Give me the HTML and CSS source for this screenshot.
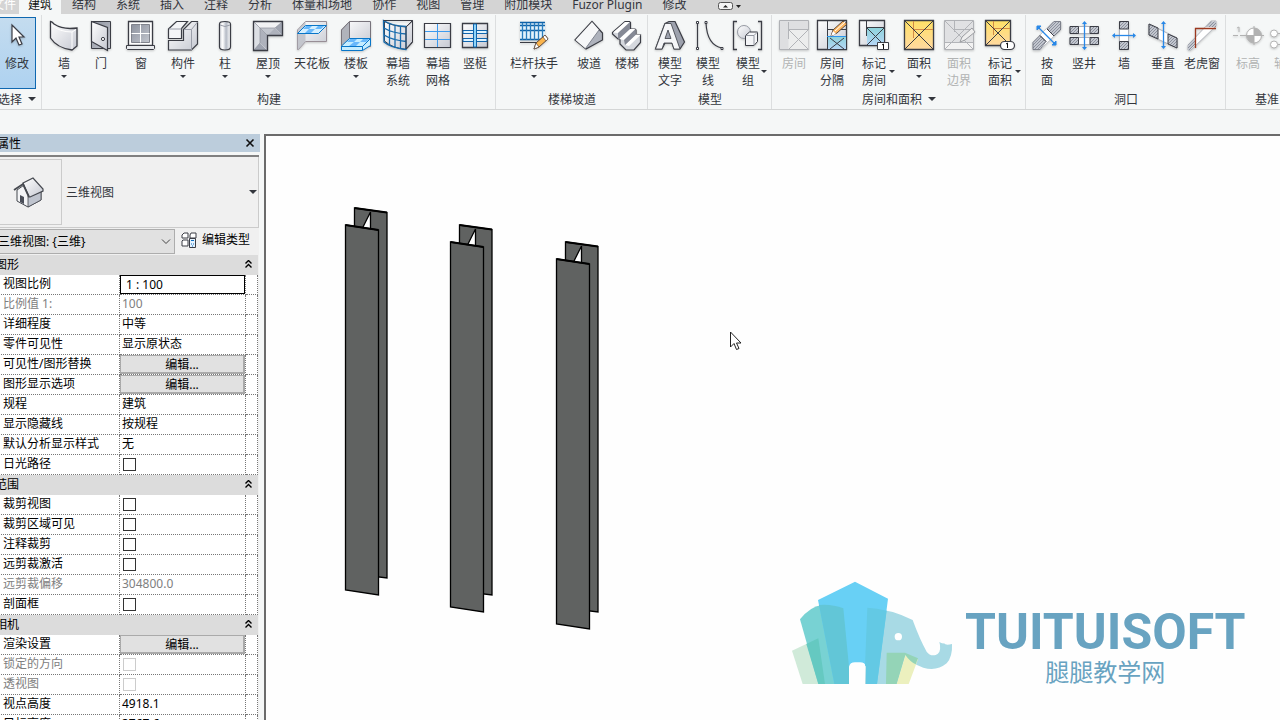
FILE: index.html
```html
<!DOCTYPE html>
<html lang="zh-CN">
<head>
<meta charset="utf-8">
<title>三维视图</title>
<link rel="stylesheet" href="styles.css">
</head>
<body>
<svg class="defs" aria-hidden="true">
  <defs>
    <linearGradient id="metal" x1="0" y1="0" x2="1" y2="1"><stop offset="0" stop-color="#fff"/><stop offset="1" stop-color="#c6c9d2"/></linearGradient>
    <linearGradient id="dark" x1="0" y1="0" x2="1" y2="1"><stop offset="0" stop-color="#8d929e"/><stop offset="1" stop-color="#c3c6ce"/></linearGradient>
    <linearGradient id="tube"><stop offset="0" stop-color="#d4d7dd"/><stop offset=".3" stop-color="#fff"/><stop offset=".6" stop-color="#b4bac5"/><stop offset="1" stop-color="#fff"/></linearGradient>
    <linearGradient id="gold" x1="0" y1="0" x2="0" y2="1"><stop offset="0" stop-color="#ffe066"/><stop offset="1" stop-color="#ffd9a0"/></linearGradient>
    <linearGradient id="aqua" x1="0" y1="0" x2="0" y2="1"><stop offset="0" stop-color="#8fd3dc"/><stop offset="1" stop-color="#b5d6f5"/></linearGradient>
    <pattern id="hatch" width="3" height="3" patternUnits="userSpaceOnUse"><path fill="#c3c7cf" d="M0 0h3v3H0z"/><path d="M0 3L3 0" stroke="#737986" stroke-width=".7"/></pattern>
  </defs>
</svg>

<div class="app">
<header class="ribbon">
  <nav class="tabs" aria-label="功能区">
    <button class="tab file">文件</button><button class="tab active">建筑</button><button class="tab">结构</button><button class="tab">系统</button><button class="tab">插入</button><button class="tab">注释</button><button class="tab">分析</button><button class="tab">体量和场地</button><button class="tab">协作</button><button class="tab">视图</button><button class="tab">管理</button><button class="tab">附加模块</button><button class="tab">Fuzor Plugin</button><button class="tab">修改</button>
    <button class="tab collapse" aria-label="最小化"><svg width="26" height="12" viewBox="0 0 26 12"><rect x="1.500" y="1.500" width="14" height="7" rx="2" fill="#f5f5f5" stroke="#555"/><path d="M6 6.500L8.500 4 11 6.500z" fill="#222"/><path d="M19 4h5l-2.500 3z" fill="#222"/></svg></button>
  </nav>
  <div class="panels">
    <section class="panel first">
      <div class="tools">
        <button class="tool modify"><svg class="icon" viewBox="0 0 32 32"><path d="M11 5v17l4-4 3 7 3-1-3-7h5z" fill="#fff" stroke="#3b3d45" stroke-width="1.200"/></svg><span>修改</span></button>
      </div>
      <h2>选择<i class="caret"></i></h2>
    </section>

    <section class="panel">
      <div class="tools">
        <button class="tool w38"><svg class="icon" viewBox="0 0 32 32"><path d="M2.500 1.500Q4 1.500 6 4q7 4.500 16 4.500 4 0 7-.5V26l-5 4Q9 28 2.500 18z" fill="url(#metal)" stroke="#3b3d45" stroke-width="1.300"/><path d="M3.500 5q8 7 20.500 7l4-2.500M24 12v17" stroke="#fff" fill="none"/></svg><span>墙</span><i class="drop"></i></button>
        <button class="tool w36"><svg class="icon" viewBox="0 0 32 32"><path d="M6.500 1.500h19v27h-19z" fill="url(#dark)" stroke="#3b3d45"/><path d="M6.500 1.500l16 6v23l-16-9z" fill="url(#metal)" stroke="#3b3d45" stroke-width="1.200"/><circle cx="18" cy="19" r="1.600" fill="#fff" stroke="#3b3d45"/></svg><span>门</span></button>
        <button class="tool w44"><svg class="icon" viewBox="0 0 32 32"><path d="M3.500 1.500h24v24h-24z" fill="#fff" stroke="#3b3d45" stroke-width="1.300"/><path d="M6.500 4.500h18v18h-18z" fill="url(#dark)" stroke="#80838c"/><path d="M15.500 4.500v18M6.500 13.500h18" stroke="#fff"/><path d="M1.500 25.500h28v3l-1 1h-26l-1-1z" fill="#e8eaed" stroke="#3b3d45"/></svg><span>窗</span></button>
        <button class="tool w40"><svg class="icon" viewBox="0 0 32 32"><path d="M1.500 20.500h15v-11l8-8h6V24l-6 6h-23z" fill="url(#metal)" stroke="#3b3d45" stroke-width="1.200"/><path d="M1.500 9l8-7.500h11l-6 7v10h-13z" fill="#f4f5f7" stroke="#3b3d45" stroke-width="1.200"/><path d="M2 9h12.500M17 9.500h7.500V30M24.500 9.500l6-7.500" stroke="#9a9ea9" fill="none"/></svg><span>构件</span><i class="drop"></i></button>
        <button class="tool w44"><svg class="icon" viewBox="0 0 32 32"><path d="M10.500 4q0-2.500 5.500-2.500T21.500 4v23q0 3-5.500 3t-5.500-3z" fill="url(#tube)" stroke="#3b3d45" stroke-width="1.200"/><path d="M11 5q5 3 10 0" stroke="#9a9ea9" fill="none"/></svg><span>柱</span><i class="drop"></i></button>
        <button class="tool w42"><svg class="icon" viewBox="0 0 32 32"><path d="M1.500 1.500h29v14h-15v15h-14z" fill="#f1f2f4"/><path d="M2 2v28l6-7V8z" fill="#dcdfe4"/><path d="M23 8l7-6v13zM8 23l7 7H2z" fill="#9fa4b0"/><path d="M23 8l7 7H15.500L8.500 8zM8 8.500l7.500 7V30L8 23z" fill="#aeb2bc"/><path d="M8 8h15l-7.500 7.500z" fill="#c2c6ce"/><path d="M1.500 1.500L8 8h15l7-6M8 8v15l-6 7M8 8l7 7" fill="none" stroke="#8c909b" stroke-width=".7"/><path d="M1.500 1.500h29v14h-15v15h-14z" fill="none" stroke="#3b3d45" stroke-width="1.300"/></svg><span>屋顶</span><i class="drop"></i></button>
        <button class="tool w46"><svg class="icon" viewBox="0 0 32 32"><path d="M1.500 10l8-8.500h21v20h-21l-7 8h-1z" fill="url(#metal)" stroke="#988e96"/><path d="M1.500 10l8-8.500v20l-7 8h-1z" fill="#b4b7bf" opacity=".7"/><path d="M1.500 13.500l8-8h21l-8 8z" fill="#d4efff" stroke="#0876c8"/><path d="M10 6h6l-3 3H7zM22 6h6l-3 3h-6zM13 9h6l-4 4H9z" fill="#68b8fb"/></svg><span>天花板</span></button>
        <button class="tool w42"><svg class="icon" viewBox="0 0 32 32"><path d="M1.500 10l8-8.500h21v25h-29z" fill="url(#metal)" stroke="#77737b"/><path d="M1.500 10l8-8.500v18l-8 7z" fill="#b0b3bb" stroke="#77737b"/><path d="M1.500 26l8-7.500h21v7l-8 5h-21z" fill="#c5edff" stroke="#0876c8"/><path d="M10 19h7l-3 3H7zM23 19h6l-3 3h-6zM14 22h6l-4 4H9z" fill="#68b8fb"/><path d="M1.500 26.500h21l8-8M22.500 26.500v4" stroke="#0876c8" fill="none"/></svg><span>楼板</span><i class="drop"></i></button>
        <button class="tool w42"><svg class="icon" viewBox="0 0 32 32"><path d="M2.500 1.500Q10 6 24 7l6.500-6.500v22L24 29.500Q10 28 2.500 21z" fill="url(#metal)" stroke="#3b3d45"/><path d="M1.500.5Q10 6 24 6.500v23Q9 28 2 22zM2 8q8 5 22 6M2 15q8 5 22 6.500M7.500 4v22M13 6v22M18.500 6.500V29" fill="none" stroke="#166bad" stroke-width="1.300"/><path d="M1.500.5h29v21L24 29V7l6.500-6" fill="none" stroke="#3b3d45"/></svg><span>幕墙<br>系统</span></button>
        <button class="tool w38"><svg class="icon" viewBox="0 0 32 32"><path d="M2.500 3.500h26v24h-26z" fill="url(#metal)" stroke="#3b3d45" stroke-width="1.200"/><path d="M15.500 4v23M3 11.500h25M3 19.500h25" stroke="#3c9aee"/></svg><span>幕墙<br>网格</span></button>
        <button class="tool w36"><svg class="icon" viewBox="0 0 32 32"><path d="M3.500 3.500h25v24h-25z" fill="url(#metal)" stroke="#3b3d45" stroke-width="1.300"/><path d="M4 10.500h24v3H4zM4 18.500h24v3H4z" fill="#dff4ff" stroke="#1065ad"/><path d="M14.500 4h3v23h-3z" fill="#8fd4f8" stroke="#1065ad"/></svg><span>竖梃</span></button>
      </div>
      <h2>构建</h2>
    </section>

    <section class="panel">
      <div class="tools">
        <button class="tool w70"><svg class="icon" viewBox="0 0 32 32"><path d="M2 3h25v17H2z" fill="#e3f3fc"/><path d="M2 2.500h25M2 5.500h25M2 10.500h25M2 19.500h24" stroke="#0f62a8" stroke-width="1.500"/><path d="M4.500 3v17M8.500 3v17M12.500 3v17M16.500 3v17M20.500 3v17M24.500 3v17" stroke="#2a7dbd" stroke-width="1.300"/><path d="M2 22.500h17" stroke="#3b3d45"/><path d="M16 29l2-6 9-8 3 4-9 8z" fill="#fbb44c" stroke="#5b4538"/><path d="M16 29l2-6 3 4zM27 15l3 4-2 2-3-4z" fill="#fff" stroke="#5b4538" stroke-width=".7"/></svg><span>栏杆扶手</span><i class="drop"></i></button>
        <button class="tool w40"><svg class="icon" viewBox="0 0 32 32"><path d="M2 20L19 1.500 29.500 13v7L13 29z" fill="#aeb2bc" stroke="#3b3d45" stroke-width="1.200"/><path d="M2.500 20L19 2l7 8-13.500 18.500z" fill="#f6f7f8"/><path d="M26 10L12.500 28.500" stroke="#80848f"/></svg><span>坡道</span></button>
        <button class="tool w36"><svg class="icon" viewBox="0 0 32 32"><path d="M1.500 12.500L14 1.500h4.500l1 1V9h4.500l1 1v4.500h4.500v8L23 30h-8l-6-6v-5H7l-5.500-5z" fill="#d5d8de" stroke="#3b3d45" stroke-width="1.200"/><path d="M2 12.500L14 2h5L7 13zM8 19L19 9h5.500L13 20zM14 25l11-10.500h5L18 26z" fill="#fff"/><path d="M7 13L19 2v7L8 19l-1-1zM13 20L24.500 9v6L14 25z" fill="#858995"/></svg><span>楼梯</span></button>
      </div>
      <h2>楼梯坡道</h2>
    </section>

    <section class="panel">
      <div class="tools">
        <button class="tool w38"><svg class="icon" viewBox="0 0 32 32"><path d="M11 3.500l4-2h6L30.500 22 26 29h-6l-2-6h-7l-3 6H1.500z" fill="#9da1ad" stroke="#3b3d45" stroke-width="1.200"/><path fill-rule="evenodd" d="M1.500 29L11 3.500h6L26 29h-6l-2-6h-8l-2 6zM11 18.500h6L14 10z" fill="#f5f6f8" stroke="#3b3d45" stroke-width=".8"/></svg><span>模型<br>文字</span></button>
        <button class="tool w38"><svg class="icon" viewBox="0 0 32 32"><path d="M5.500 3v25M14 3q1 22 16 25" stroke="#3b3d45" stroke-width="1.200" fill="none"/><path d="M4.500 1.500h2v2h-2zM4.500 27.500h2v2h-2zM13 1.500h2v2h-2zM29 27.500h2v2h-2z" fill="#fff" stroke="#3b3d45"/></svg><span>模型<br>线</span></button>
        <button class="tool w42 side"><svg class="icon" viewBox="0 0 32 32"><path d="M5 1.500H1.500v28H5M26 1.500h3.500v28H26" fill="none" stroke="#3b3d45" stroke-width="1.300"/><circle cx="12" cy="12" r="6.500" fill="url(#metal)" stroke="#9599a2"/><path d="M13.500 15.500l4-3.500h8v9.500l-3.500 4h-8.500z" fill="#f4f5f7" stroke="#3b3d45"/><path d="M13.500 15.500H22v10M22 15.500l3.500-3.500" fill="none" stroke="#9599a2"/></svg><span>模型<br>组</span><i class="drop"></i></button>
      </div>
      <h2>模型</h2>
    </section>

    <section class="panel">
      <div class="tools">
        <button class="tool w38" disabled><svg class="icon" viewBox="0 0 32 32"><path d="M1.500.5h29v29h-29z" fill="#dedfe1" stroke="#afb1b5"/><path d="M10.500 10h20v19h-20z" fill="#eceded"/><path d="M10.500 2v17M11 9.500h19M11 10l19 19M30 10L11 29" stroke="#b2b4b8" fill="none"/></svg><span>房间</span></button>
        <button class="tool w38"><svg class="icon" viewBox="0 0 32 32"><path d="M1.500.5h29v29h-29z" fill="url(#metal)" stroke="#3b3d45" stroke-width="1.300"/><path d="M12 17h18v12H12z" fill="url(#aqua)"/><path d="M11.500 1v28M12 9.500h18M14 18l14 11M28 18L14 29" stroke="#3b3d45"/><path d="M11 16.500h19" stroke="#2d95ed"/><path d="M15 16l2-6L27 1l4 3-10 9z" fill="#ffba65" stroke="#5b4538"/><path d="M15 16l2-5 3 3z" fill="#fff"/><path d="M19 11L29 2" stroke="#fff"/></svg><span>房间<br>分隔</span></button>
        <button class="tool w46 side"><svg class="icon" viewBox="0 0 32 32"><path d="M1.500.5h25v25h-25z" fill="url(#metal)" stroke="#3b3d45" stroke-width="1.300"/><path d="M9 8h17v17H9z" fill="url(#aqua)"/><path d="M8.500 1v15M9 7.500h17M9 8l17 17M26 8L9 25" stroke="#3b3d45"/><path d="M19.500 22.500h11v7h-11z" fill="#fff" stroke="#3b3d45"/><path d="M24 25l1.500-1v5" fill="none" stroke="#111"/></svg><span>标记<br>房间</span><i class="drop"></i></button>
        <button class="tool w44"><svg class="icon" viewBox="0 0 32 32"><path d="M1.500.5h29v29h-29z" fill="url(#gold)" stroke="#3b3d45" stroke-width="1.300"/><path d="M10.500 1v17M11 9.500h19" stroke="#d18a45"/><path d="M2 1l28 28M30 1L2 29" stroke="#3b3d45"/></svg><span>面积</span><i class="drop"></i></button>
        <button class="tool w36" disabled><svg class="icon" viewBox="0 0 32 32"><path d="M1.500.5h29v29h-29z" fill="#e0e1e3" stroke="#afb1b5"/><path d="M2 22h28v7H2z" fill="#f2f2f2"/><path d="M11.500 1v11M11 9.500h19M2 1l28 28M30 1L2 29M2 22.500h28" stroke="#b2b4b8"/><path d="M17 22l2-5L29 8l3 4-10 8z" fill="#eee" stroke="#9b9da1"/></svg><span>面积<br>边界</span></button>
        <button class="tool w46 side"><svg class="icon" viewBox="0 0 32 32"><path d="M1.500.5h25v25h-25z" fill="url(#gold)" stroke="#3b3d45" stroke-width="1.300"/><path d="M9.500 1v14M9 8.500h17" stroke="#d18a45"/><path d="M2 1l24 24M26 1L2 25" stroke="#3b3d45"/><rect x="16.500" y="21.500" width="14" height="8" rx="4" fill="#fff" stroke="#3b3d45" stroke-width="1.200"/><path d="M22 24l1.500-1v5" fill="none" stroke="#111"/></svg><span>标记<br>面积</span><i class="drop"></i></button>
      </div>
      <h2>房间和面积<i class="caret"></i></h2>
    </section>

    <section class="panel">
      <div class="tools">
        <button class="tool w36"><svg class="icon" viewBox="0 0 32 32"><path d="M2 22L22 2h8v7L9 30H2z" fill="#fff" stroke="#c4c7cc"/><path d="M16 9l7-7.500h6.500V10L23 16zM2 29.500v-7l7-7 6 6-6 8z" fill="url(#hatch)" stroke="#6b6f7a" stroke-width=".8"/><path d="M16 9l7 7M9 15.500l6 6" stroke="#3b3d45"/><path d="M7 7l17 17" stroke="#2888e8" stroke-width="1.300"/><path d="M6 10V6h4zM25 21v4h-4z" fill="#2888e8" stroke="#2888e8"/></svg><span>按<br>面</span></button>
        <button class="tool w38"><svg class="icon" viewBox="0 0 32 32"><path d="M2 6.500h28v7H2zM2 17.500h28v7H2z" fill="#fff" stroke="#adb1ba"/><path d="M2 6.500h8.500v7H2zM22 6.500h8.500v7H22zM2 17.500h8.500v7H2zM22 17.500h8.500v7H22z" fill="url(#hatch)" stroke="#3b3d45"/><path d="M16.500 3v25" stroke="#2888e8" stroke-width="1.300"/><path d="M14 4l2.500-3L19 4zM14 27l2.500 3 2.500-3z" fill="#2888e8"/></svg><span>竖井</span></button>
        <button class="tool w42"><svg class="icon" viewBox="0 0 32 32"><path d="M11.500 1.500h9v28h-9z" fill="#fff" stroke="#adb1ba"/><path d="M11.500 1.500h9V9h-9zM11.500 21.500h9v8h-9z" fill="url(#hatch)" stroke="#3b3d45"/><path d="M5 15.500h22" stroke="#2888e8" stroke-width="1.300"/><path d="M7 13l-3 2.500L7 18zM25 13l3 2.500-3 2.500z" fill="#2888e8"/></svg><span>墙</span></button>
        <button class="tool w36"><svg class="icon" viewBox="0 0 32 32"><path d="M2 4l28 14v10L2 15z" fill="#fff" stroke="#adb1ba"/><path d="M2 4l9 4v11l-9-4zM21 14l9 4v10l-9-4z" fill="url(#hatch)" stroke="#3b3d45"/><path d="M16.500 4v23" stroke="#2888e8" stroke-width="1.300"/><path d="M14 4l2.500-3L19 4zM14 26l2.500 3 2.500-3z" fill="#2888e8"/></svg><span>垂直</span></button>
        <button class="tool w42"><svg class="icon" viewBox="0 0 32 32"><path d="M2 25L25 1h5v5L5 30H2z" fill="#fff" stroke="#b4b7be"/><path d="M20 7l5-5.500h5V7h-8zM2 25l7-7v7l-5 5H2z" fill="url(#hatch)"/><path d="M9.500 28V8.500H30" fill="none" stroke="#9c381e" stroke-width="1.300"/></svg><span>老虎窗</span></button>
      </div>
      <h2>洞口</h2>
    </section>

    <section class="panel last">
      <div class="tools">
        <button class="tool w38" disabled><svg class="icon" viewBox="0 0 32 32"><path d="M1 15.500h5M8 15.500h4M5 8l2-1v5" fill="none" stroke="#b2b2b2"/><circle cx="22" cy="15.500" r="7.500" fill="#fff" stroke="#b2b2b2"/><path d="M22 8a7.500 7.500 0 017.500 7.500H22zM22 15.500V23a7.500 7.500 0 01-7.500-7.500z" fill="#b2b2b2"/><path d="M12 15.500h20M22 6v19" stroke="#b2b2b2"/></svg><span>标高</span></button>
        <button class="tool w38" disabled><svg class="icon" viewBox="0 0 32 32"><circle cx="4" cy="13.500" r="3.500" fill="#fff" stroke="#b2b2b2"/><circle cx="4" cy="24.500" r="3.500" fill="#fff" stroke="#b2b2b2"/><path d="M8 13.500h20M8 24.500h20" stroke="#b2b2b2"/></svg><span>轴网</span></button>
      </div>
      <h2>基准</h2>
    </section>
  </div>
</header>

<main class="work">
  <aside class="props">
    <div class="title"><h1>属性</h1><button class="close" aria-label="关闭"><svg width="10" height="10" viewBox="0 0 10 10"><path d="M1.500 1.500l7 7M8.500 1.500l-7 7" stroke="#111" stroke-width="1.600"/></svg></button></div>
    <div class="frame">
      <button class="type">
        <span class="thumb"><svg width="32" height="32" viewBox="0 0 32 32"><path d="M4 14l10-7 14 8v9l-13 7-11-6z" fill="#f3f4f6" stroke="#45484f"/><path d="M15 20l13-7v11l-13 7z" fill="#bfc4ce" stroke="#45484f" stroke-width=".8"/><path d="M10 7l10-5 10 11v2l-13 6h-1z" fill="url(#metal)" stroke="#45484f" stroke-width="1.200"/><path d="M16 21L10 8l-9 6" fill="none" stroke="#45484f" stroke-width="1.800"/><path d="M7 19l4 2v7l-4-2z" fill="#4a4e58"/></svg></span>
        <span class="name">三维视图</span><i class="caret"></i>
      </button>
      <div class="pick">
        <span class="combo"><select aria-label="视图"><option>三维视图: {三维}</option></select><svg width="10" height="6" viewBox="0 0 10 6"><path d="M1 .5l4 4 4-4" fill="none" stroke="#444"/></svg></span>
        <button class="edit-type"><svg width="16" height="16" viewBox="0 0 16 16"><path d="M1 3l2-2h4v5H1zM9 3l1-2h5v5H9zM1 9l1-1h5v6H1z" fill="#fff" stroke="#3b3d45"/><path d="M8.500 6.500h6v9h-6z" fill="#e5f3ff" stroke="#3b3d45"/><path d="M10 8.500h3M10 12h1M12 12h1M11 14h1" stroke="#0f6fc0"/></svg>编辑类型</button>
      </div>
      <table>
        <colgroup><col class="c-name"><col><col class="c-end"></colgroup>
        <tbody>
        <tr class="group"><th colspan="2">图形</th><td><svg class="fold" viewBox="0 0 7 8"><path d="M.5 3.500l3-3 3 3M.5 7.500l3-3 3 3"/></svg></td></tr>
        <tr><th><label for="scale">视图比例</label></th><td class="fill"><input id="scale" type="text" value="1 : 100"></td><td></td></tr>
        <tr class="dim"><th>比例值 1:</th><td>100</td><td></td></tr>
        <tr><th>详细程度</th><td>中等</td><td></td></tr>
        <tr><th>零件可见性</th><td>显示原状态</td><td></td></tr>
        <tr><th>可见性/图形替换</th><td class="fill"><button class="edit">编辑...</button></td><td></td></tr>
        <tr><th>图形显示选项</th><td class="fill"><button class="edit">编辑...</button></td><td></td></tr>
        <tr><th>规程</th><td>建筑</td><td></td></tr>
        <tr><th>显示隐藏线</th><td>按规程</td><td></td></tr>
        <tr><th>默认分析显示样式</th><td>无</td><td></td></tr>
        <tr><th><label for="sun">日光路径</label></th><td><input id="sun" type="checkbox"></td><td></td></tr>
        <tr class="group"><th colspan="2">范围</th><td><svg class="fold" viewBox="0 0 7 8"><path d="M.5 3.500l3-3 3 3M.5 7.500l3-3 3 3"/></svg></td></tr>
        <tr><th><label for="crop">裁剪视图</label></th><td><input id="crop" type="checkbox"></td><td></td></tr>
        <tr><th><label for="cropvis">裁剪区域可见</label></th><td><input id="cropvis" type="checkbox"></td><td></td></tr>
        <tr><th><label for="anno">注释裁剪</label></th><td><input id="anno" type="checkbox"></td><td></td></tr>
        <tr><th><label for="far">远剪裁激活</label></th><td><input id="far" type="checkbox"></td><td></td></tr>
        <tr class="dim"><th>远剪裁偏移</th><td>304800.0</td><td></td></tr>
        <tr><th><label for="box">剖面框</label></th><td><input id="box" type="checkbox"></td><td></td></tr>
        <tr class="group"><th colspan="2">相机</th><td><svg class="fold" viewBox="0 0 7 8"><path d="M.5 3.500l3-3 3 3M.5 7.500l3-3 3 3"/></svg></td></tr>
        <tr><th>渲染设置</th><td class="fill"><button class="edit">编辑...</button></td><td></td></tr>
        <tr class="dim"><th><label for="lock">锁定的方向</label></th><td><input id="lock" type="checkbox" disabled></td><td></td></tr>
        <tr class="dim"><th><label for="persp">透视图</label></th><td><input id="persp" type="checkbox" disabled></td><td></td></tr>
        <tr><th>视点高度</th><td>4918.1</td><td></td></tr>
        <tr><th>目标高度</th><td>3767.6</td><td></td></tr>
        </tbody>
      </table>
    </div>
  </aside>

  <div class="canvas">
    <svg class="model" width="280" height="440" viewBox="336 200 280 440">
      <defs>
        <g id="column" stroke="#000" fill="#606261">
          <path d="M354.500 208l32.500 4.500v365.500l-33-4z" stroke-width="1.300"/>
          <path d="M370.500 212v18l-8-2z" fill="#fff" stroke-width="1.300"/>
          <path d="M345.500 225l33 5v365l-33-5z" stroke-width="1.300"/>
          <path d="M354.500 208l32.500 4.500M345.500 225l33 5" stroke-width="2"/>
        </g>
      </defs>
      <use href="#column"/><use href="#column" x="105" y="17"/><use href="#column" x="211" y="34"/>
    </svg>
    <svg class="pointer" width="12" height="20" viewBox="0 0 12 20"><path d="M.5 1v15l3.500-3.500 2.500 6 2.500-1-2.500-5.500h4.500z" fill="#fff" stroke="#222"/></svg>
    <div class="brand">
      <svg width="164" height="105" viewBox="30 30 492 315">
        <path fill="#d0ead9" d="M36 242L115 205 135 342H68z"/>
        <path fill="#78d2d3" d="M60 148Q90 110 125 105q35-2 65 10l17 175v52h-92z"/>
        <path fill="#65c9c1" d="M79 222l36-17 20 137h-20z"/>
        <path fill="#a8dae5" d="M262 113q75 5 136 37 22 60 42 95 10 14 27 10 16-6 13-30l-2-9q7 5 14 4 5 7 24 2 2 38-16 58-30 25-70 13-35-11-54-38l-26 87h-95z"/>
        <path fill="#68d0f5" d="M114 90L225 35l99 51-33 256h-33v-52q-3-13-18-13h-15q-15 0-18 13v52h-44z"/>
        <path fill="#62c6d7" d="M117 105q40-3 73 10l17 175v52h-44z"/>
        <path fill="#63c9e4" d="M262 113q30 1 58 9l-29 220h-33v-55h-3z"/>
        <path fill="#ecf0be" d="M376 256l38 12-28 74h-36z"/>
        <path fill="#94d4b7" d="M320 248h55l39 17-7 18q-17-8-31-28l-26 87h-32z"/>
        <circle cx="355" cy="200" r="11" fill="#fff"/>
      </svg>
      <div class="words"><strong>TUITUISOFT</strong><span>腿腿教学网</span></div>
    </div>
  </div>
</main>
</div>
</body>
</html>
```
FILE: styles.css
```css
* { box-sizing: border-box; }
body {
  margin: 0;
  overflow: hidden;
  font: 12px/17px "Noto Sans", "Noto Sans CJK SC", sans-serif;
  color: #33363d;
  background: #f5f7f7;
}
button, input, select { font: inherit; color: inherit; margin: 0; padding: 0; border: 0; background: none; border-radius: 0; }
h1, h2 { margin: 0; font: inherit; }
.defs { position: absolute; width: 0; height: 0; }
.app { display: flex; flex-direction: column; height: 100vh; margin-left: -8px; }

/* ribbon */
.tabs { display: flex; align-items: flex-end; height: 14px; background: #d4d4d4; overflow: hidden; }
.tab { flex: none; height: 19px; padding: 0 10px; line-height: 17px; white-space: nowrap; }
.tab.file { padding: 0 3px 0 0; color: #fff; }
.tab.active { padding: 0 9px; background: #f5f7f7; color: #111; }
.tab.active + .tab { padding-left: 11px; }
.collapse svg { display: block; margin-left: 10px; margin-top: 4px; }
.panels { display: flex; height: 96px; padding-top: 1px; border-bottom: 1px solid #d4d6d6; overflow: hidden; }
.panel { flex: none; display: flex; flex-direction: column; padding: 2px 2px 0 3px; border-right: 1px solid #dcdedf; }
.panel.first { padding: 2px 5px 0 6px; }
.panel.last { border: 0; }
.tools { display: flex; height: 73px; }
.tool { position: relative; display: flex; flex-direction: column; align-items: center; padding-top: 3px; white-space: nowrap; line-height: 17px; }
.tool:disabled { color: #b1b3b3; }
.icon { flex: none; display: block; width: 32px; height: 32px; margin-bottom: 3px; overflow: visible; filter: drop-shadow(0 1px 1px rgba(0, 0, 0, .2)); }
.modify { width: 38px; height: 72px; border: 1px solid #0f68b0; background: linear-gradient(#c4dcef, #aed2f0); padding-top: 2px; }
.w36 { width: 36px; }
.w38 { width: 38px; }
.w40 { width: 40px; }
.w42 { width: 42px; }
.w44 { width: 44px; }
.w46 { width: 46px; }
.w70 { width: 70px; }
.panel h2 { display: flex; align-items: center; justify-content: center; height: 18px; line-height: 17px; }
.panel.first h2 { justify-content: flex-start; }
.caret { flex: none; width: 0; border: 4px solid transparent; border-top-color: #33363d; border-bottom: 0; margin-left: 6px; }
.drop { width: 0; margin-top: 3px; border: 3px solid transparent; border-top-color: #33363d; border-bottom: 0; }
.side .drop { position: absolute; right: 2px; top: 53px; margin: 0; }

/* workspace */
.work { flex: 1; min-height: 0; display: flex; padding-top: 24px; }
.props { flex: none; width: 268px; margin-right: 4px; display: flex; flex-direction: column; overflow: hidden; color: #000; }
.title { flex: none; display: flex; align-items: center; justify-content: space-between; height: 18px; padding: 0 4px 0 5px; background: #bccddc; }
.close { width: 10px; height: 10px; margin-right: 1px; }
.close svg { display: block; }
.frame { flex: 1; min-height: 0; margin: 3px 1px 0 0; border-top: 2px solid #808080; background: #f0f0f0; }
.type { display: flex; align-items: center; width: 100%; height: 71px; padding: 2px 1px 2px 0; border: 1px solid #cbcbcb; border-width: 0 1px 1px 0; text-align: left; color: #33363d; }
.thumb { display: flex; align-items: center; justify-content: center; width: 70px; height: 66px; padding-left: 4px; border: 1px solid #cbcbcb; }
.name { flex: 1; padding-left: 4px; }
.pick { display: flex; height: 27px; padding-top: 1px; }
.combo { position: relative; width: 183px; height: 25px; }
.combo select { appearance: none; width: 100%; height: 100%; padding-left: 5px; border: 1px solid #adadad; background: #e1e1e1; }
.combo svg { position: absolute; right: 4px; top: 10px; }
.edit-type { display: flex; align-items: center; gap: 5px; height: 21px; padding-left: 6px; white-space: nowrap; }

table { width: 100%; table-layout: fixed; border-spacing: 0; border-right: 1px solid #f0f0f0; background: #fff; }
.c-name { width: 128px; }
.c-end { width: 12px; }
tr { height: 20px; }
th, td { height: 20px; padding: 0 0 2px 2px; border-right: 1px dotted #777; border-bottom: 1px dotted #777; font-weight: 400; text-align: left; line-height: 17px; white-space: nowrap; vertical-align: middle; }
th { padding-left: 11px; }
.dim { color: #808080; }
.group th, .group td { background: #dcdcdc; border: 0; padding-left: 3px; overflow: visible; }
.fold { display: block; width: 7px; height: 8px; margin-left: -4px; fill: none; stroke: #000; stroke-width: 1.4; }
td.fill { padding: 0; }
#scale { display: block; width: 100%; height: 19px; padding: 0 5px 1px; border: 1px solid #000; background: #fff; }
td .edit { display: block; width: 100%; height: 19px; padding-top: 1px; line-height: 16px; border: 1px solid #aaa; border-width: 1px 2px 2px 1px; background: #e1e1e1; }
input[type="checkbox"] { appearance: none; display: block; width: 13px; height: 13px; margin: 2px 0 0 1px; border: 1px solid #333; background: #fff; }
input[type="checkbox"]:disabled { border-color: #ccc; }

/* drawing area */
.canvas { flex: 1; position: relative; overflow: hidden; border: solid #6b6b6b; border-width: 2px 0 0 2px; background: #fefefe; }
.model { position: absolute; left: 70px; top: 64px; }
.pointer { position: absolute; left: 464px; top: 195px; }
.brand { position: absolute; left: 524px; top: 444px; display: flex; }
.words { display: flex; flex-direction: column; align-items: center; margin-left: 11px; padding-top: 20px; color: #68a3c1; }
.words strong { font: 700 50px/64px Roboto, "Liberation Sans", sans-serif; }
.words span { margin-top: -8px; font-size: 24px; line-height: 32px; }
```
